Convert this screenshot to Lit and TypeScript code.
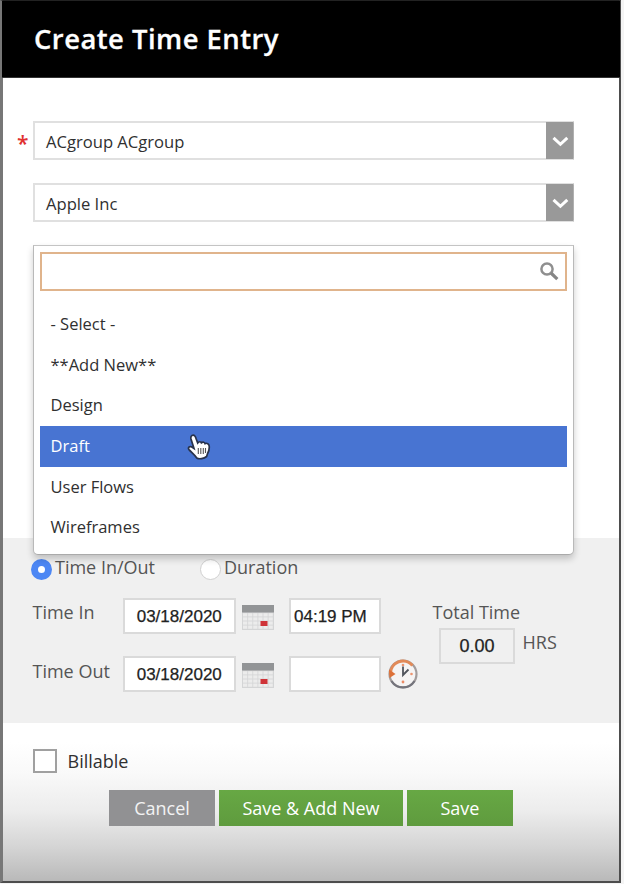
import { LitElement, html, css, svg } from "lit";
import { customElement, property, state } from "lit/decorators.js";
import { classMap } from "lit/directives/class-map.js";

@customElement("select-box")
class SelectBox extends LitElement {
  @property() value = "";

  static styles = css`
    :host { display: flex; box-sizing: border-box; height: 39px; border: 2px solid #e0e0e0; border-right: 1px solid #b0b0b0; background: #fff; }
    .value { flex: 1; padding-left: 11px; font-size: 16.6px; line-height: 37px; color: #303030; }
    .arrow { width: 27px; margin: -1px 0; background: #999; display: flex; align-items: center; justify-content: flex-end; }
  `;

  render() {
    return html`
      <div class="value">${this.value}</div>
      <div class="arrow">
        <svg width="22" height="12" viewBox="0 0 22 12">
          <path d="M2.5 2.8 L9.4 9.3 L16.3 2.8" fill="none" stroke="#fff" stroke-width="3" />
        </svg>
      </div>`;
  }
}

@customElement("calendar-icon")
class CalendarIcon extends LitElement {
  static styles = css`:host { display: block; width: 32px; height: 25px; } svg { display: block; }`;

  render() {
    return html`
      <svg width="32" height="25" viewBox="0 0 32 25">
        <rect width="32" height="25" fill="#d4d5d6" />
        <rect width="32" height="7.5" fill="#929496" />
        ${[0, 1, 2, 3, 4, 5].map((c) =>
          [0, 1, 2, 3].map((r) => svg`<rect x=${1 + c * 5.1} y=${8.2 + r * 4.1} width="4.3" height="3.3" fill="#ececec" />`)
        )}
        <rect x="18.5" y="16" width="7" height="5" fill="#cf3338" />
      </svg>`;
  }
}

@customElement("app-root")
class AppRoot extends LitElement {
  @state() private selected = "Draft";
  private options = ["- Select -", "**Add New**", "Design", "Draft", "User Flows", "Wireframes"];

  static styles = css`
    :host { display: block; width: 624px; height: 884px; overflow: hidden; background: #f4f4f4; font-family: "Open Sans", sans-serif; color: #303030; }
    * { box-sizing: border-box; }
    .window { width: 621px; height: 883px; border: 2px solid #4d4d4d; border-top: 1px solid #222; border-left: 3px solid #777; display: flex; flex-direction: column; background: #fff; }
    .header { height: 77px; flex: none; margin-left: -1px; margin-right: -1px; background: #000; color: #fff; padding: 0 0 0 32px; border-bottom: 1px solid #333; }
    h1 { margin: 0; font-size: 27.4px; font-weight: 600; line-height: 76px; letter-spacing: .48px; -webkit-text-stroke: .3px #fff; }
    .fields { height: 460px; flex: none; padding: 43px 45px 0 13px; display: flex; flex-direction: column; gap: 23px; }
    .field { display: flex; }
    .mark { width: 17px; padding-left: 1px; color: #e03030; font-size: 21px; font-weight: 600; line-height: 45px; height: 39px; }
    select-box { flex: 1; }
    .anchor { position: relative; height: 39px; }
    .panel { position: absolute; z-index: 2; left: 17px; top: 0; width: 541px; height: 310px; background: #fff; border: 1px solid #bbb; border-color: #c4c4c4 #b9b9b9 #aaa; border-radius: 0 0 5px 5px; box-shadow: 0 4px 7px rgba(0,0,0,.2); padding: 6px; }
    .search { height: 39px; border: 2px solid #e0b48c; display: flex; align-items: center; justify-content: flex-end; padding-right: 5px; }
    .list { list-style: none; margin: 13.3px 0 0; padding: 0; }
    .item { height: 40.6px; line-height: 40.6px; padding-left: 10.5px; font-size: 16.5px; }
    .item.on { background: #4874d2; color: #fff; }
    .cursor { position: absolute; left: 153px; top: 187px; }
    .time { height: 185px; flex: none; background: #f0f0f0; padding: 16px 0 0 28px; color: #555; font-size: 18px; }
    .radios { display: flex; height: 28px; line-height: 27px; }
    .choice { display: flex; width: 169px; gap: 3px; }
    .dot { width: 21px; height: 21px; margin-top: 5px; border-radius: 50%; background: #fff; border: 1px solid #d0d0d0; }
    .dot.on { background: #fff; border: 7px solid #4d87f4; }
    .grid { display: flex; padding-top: 16px; padding-left: 1.5px; }
    .rows { display: flex; flex-direction: column; gap: 22px; width: 400px; }
    .row { display: flex; height: 36px; align-items: center; }
    .label { width: 90px; line-height: 28px; height: 36px; white-space: nowrap; }
    .row + .row .label { line-height: 30px; }
    .box { height: 36px; border: 2px solid #dadada; background: #fff; font: 17px/33px "Liberation Sans", sans-serif; color: #222; text-align: center; -webkit-text-stroke: .25px #222; white-space: nowrap; }
    .date { width: 113.5px; }
    .clocktime { width: 92px; margin-left: 15px; text-align: left; padding-left: 3px; }
    calendar-icon { margin: 2px 0 0 6px; }
    .clock { margin-left: 6px; }
    .sum-label { line-height: 28px; height: 30px; }
    .sum { display: flex; padding-left: 6.5px; gap: 7.5px; }
    .total { width: 76px; background: #f0f0f0; font-size: 18px; }
    .hrs { line-height: 29px; }
    .footer { flex: 1; padding: 26px 0 0 30px; background: linear-gradient(#fff 0, #fff 12%, #f9f9f9 32%, #ececec 56%, #d5d5d5 78%, #b9b9b9 100%); }
    .bill { display: flex; align-items: center; gap: 10.5px; height: 24px; font-size: 18px; }
    .check { width: 24px; height: 24px; border: 2px solid #a0a0a0; background: #fff; }
    .buttons { display: flex; gap: 4px; margin: 17px 0 0 76px; }
    button { height: 36px; border: 0; padding: 0 0 1px; color: #fff; font: 18px "Open Sans", sans-serif; background: linear-gradient(#67a844, #5f9b3e); width: 106px; white-space: nowrap; }
    .cancel { background: #919193; color: #f3f3f3; }
    .wide { width: 184px; }
  `;

  private clock() {
    return html`
      <svg class="clock" width="32" height="32" viewBox="0 0 32 32">
        <circle cx="16" cy="16" r="13.5" fill="#f5f4f4" stroke="#a29c9c" stroke-width="2.2" />
        <path d="M4.5 23 A13.5 13.5 0 0 0 27.5 23" fill="none" stroke="#74747c" stroke-width="2.2" />
        <path d="M3.5 16 A12.5 12.5 0 0 1 25.5 7.5" fill="none" stroke="#e28a58" stroke-width="3" />
        <path d="M2 11.5 L8.5 16 L2.5 20 Z" fill="#dd7139" />
        <circle cx="16" cy="7" r="1.3" fill="#eb9470" /><circle cx="24.5" cy="16" r="1.3" fill="#eb9470" /><circle cx="16" cy="24" r="1.4" fill="#eb8b65" />
        <path d="M16 8.5 V17 L21.5 11.5" fill="none" stroke="#50545c" stroke-width="1.8" />
      </svg>`;
  }

  render() {
    return html`
      <div class="window">
        <div class="header"><h1>Create Time Entry</h1></div>
        <div class="fields">
          <div class="field"><span class="mark">*</span><select-box value="ACgroup ACgroup"></select-box></div>
          <div class="field"><span class="mark"></span><select-box value="Apple Inc"></select-box></div>
          <div class="anchor">
            <div class="panel">
              <div class="search">
                <svg width="21" height="21" viewBox="0 0 21 21">
                  <circle cx="8" cy="8" r="5.6" fill="none" stroke="#8f8f8f" stroke-width="2.5" />
                  <path d="M12 12 L18.3 18.2" stroke="#858585" stroke-width="3.2" />
                </svg>
              </div>
              <ul class="list">
                ${this.options.map((o) => html`<li class=${classMap({ item: true, on: o === this.selected })} @click=${() => (this.selected = o)}>${o}</li>`)}
              </ul>
              <svg class="cursor" width="25" height="28" viewBox="0 0 25 28">
                <path d="M5 2.5 C7.5 1.2 8.6 4 9.2 6 L10.7 10 C12 8.2 14 8.5 14.4 9.8 C16 8.6 17.6 9.2 18 10.6 C20 9.7 22 10.8 22.2 13 C22.6 17 21.6 19 20.4 21 L19.6 23.5 C17 25.8 12 26.4 9.8 25 C8 22 4.5 19.5 2 16.6 C.6 14.6 2.5 13 4.4 13.8 L7 15.5 L4 6 C3.6 4.2 4 3 5 2.5 Z" fill="#fff" stroke="#28324a" stroke-width="1.7" />
                <path d="M11.3 15 V21 M13.8 15 V21 M16.3 15 V21 M18.5 15 V20" stroke="#555" stroke-width="1.1" />
              </svg>
            </div>
          </div>
        </div>
        <div class="time">
          <div class="radios">
            <div class="choice"><span class="dot on"></span><span>Time In/Out</span></div>
            <div class="choice"><span class="dot"></span><span>Duration</span></div>
          </div>
          <div class="grid">
            <div class="rows">
              <div class="row"><span class="label">Time In</span><div class="box date">03/18/2020</div><calendar-icon></calendar-icon><div class="box clocktime">04:19 PM</div></div>
              <div class="row"><span class="label">Time Out</span><div class="box date">03/18/2020</div><calendar-icon></calendar-icon><div class="box clocktime"></div>${this.clock()}</div>
            </div>
            <div>
              <div class="sum-label">Total Time</div>
              <div class="sum"><div class="box total">0.00</div><span class="hrs">HRS</span></div>
            </div>
          </div>
        </div>
        <div class="footer">
          <div class="bill"><span class="check"></span><span>Billable</span></div>
          <div class="buttons"><button class="cancel">Cancel</button><button class="wide">Save &amp; Add New</button><button>Save</button></div>
        </div>
      </div>`;
  }
}
